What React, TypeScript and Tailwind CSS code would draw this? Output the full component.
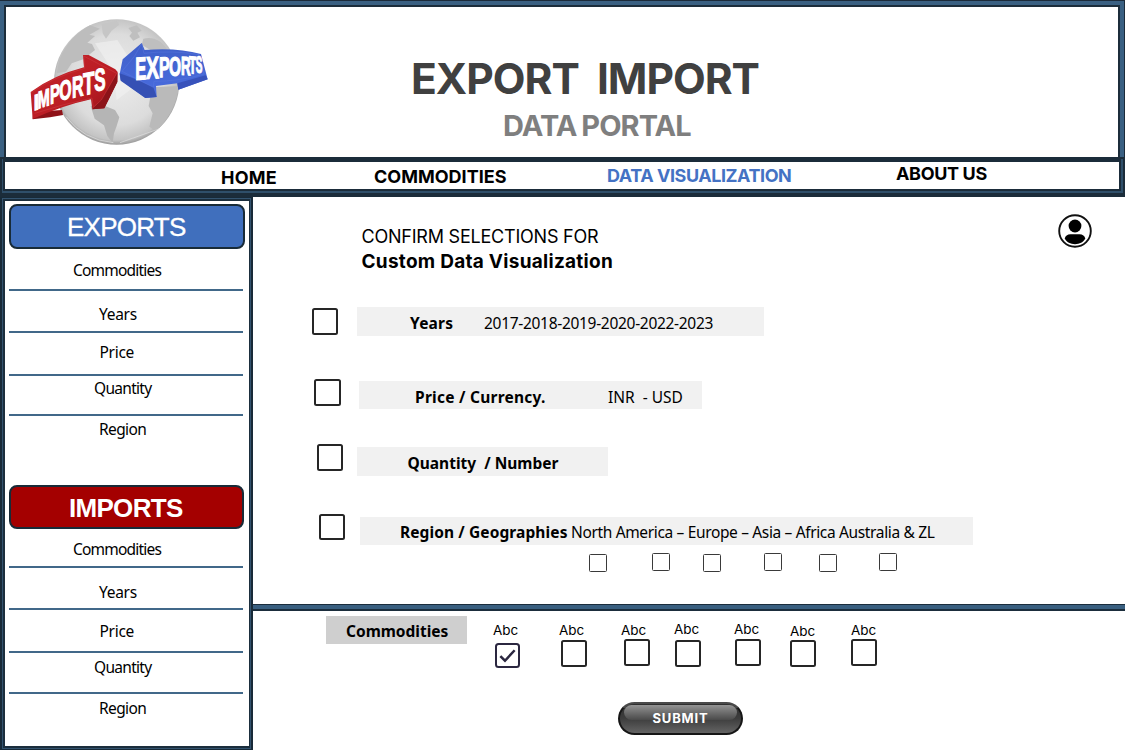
import type { ReactNode } from "react";

type Glyph = { ch: string; x: number; y: number; size: number; w: number; skew: number };

const importGlyphs: Glyph[] = [
  { ch: "I", x: 101, y: 332, size: 66, w: 16, skew: -18 },
  { ch: "M", x: 113, y: 326, size: 72, w: 36, skew: -18 },
  { ch: "P", x: 150, y: 313, size: 78, w: 30, skew: -16 },
  { ch: "O", x: 178, y: 303, size: 82, w: 37, skew: -15 },
  { ch: "R", x: 216, y: 294, size: 88, w: 35, skew: -13 },
  { ch: "T", x: 249, y: 286, size: 94, w: 34, skew: -10 },
  { ch: "S", x: 283, y: 274, size: 94, w: 34, skew: -8 },
];

const exportGlyphs: Glyph[] = [
  { ch: "E", x: 406, y: 240, size: 96, w: 33, skew: -4 },
  { ch: "X", x: 438, y: 237, size: 94, w: 39, skew: -4 },
  { ch: "P", x: 477, y: 232, size: 86, w: 32, skew: -3 },
  { ch: "O", x: 507, y: 228, size: 82, w: 36, skew: 0 },
  { ch: "R", x: 543, y: 224, size: 78, w: 29, skew: 3 },
  { ch: "T", x: 567, y: 220, size: 74, w: 22, skew: 6 },
  { ch: "S", x: 587, y: 217, size: 70, w: 20, skew: 8 },
];

function Letters({ glyphs, color }: { glyphs: Glyph[]; color: string }) {
  return (
    <>
      {glyphs.map((g) => (
        <text
          key={g.ch}
          transform={`translate(${g.x} ${g.y}) skewY(${g.skew})`}
          fontSize={g.size}
          textLength={g.w}
          lengthAdjust="spacingAndGlyphs"
          fill={color}
          stroke={color}
          strokeWidth="3.5"
          className="font-['Liberation_Sans',sans-serif] font-bold"
        >
          {g.ch}
        </text>
      ))}
    </>
  );
}

function Logo() {
  return (
    <svg viewBox="18 21 702 450" className="h-[150px] w-[234px] shrink-0">
      <defs>
        <radialGradient id="globe" cx="0.5" cy="0.48" r="0.52">
          <stop offset="0" stopColor="#ececec" />
          <stop offset="0.7" stopColor="#dcdcdc" />
          <stop offset="0.93" stopColor="#c4c4c4" />
          <stop offset="1" stopColor="#9c9c9c" />
        </radialGradient>
        <linearGradient id="red" x1="0" y1="0" x2="1" y2="1">
          <stop offset="0" stopColor="#c3242b" />
          <stop offset="0.6" stopColor="#bb1d24" />
          <stop offset="1" stopColor="#8f1016" />
        </linearGradient>
        <linearGradient id="blue" x1="0" y1="0" x2="0" y2="1">
          <stop offset="0" stopColor="#3f5fc8" />
          <stop offset="1" stopColor="#4a6de0" />
        </linearGradient>
      </defs>
      <circle cx="350" cy="246" r="188" fill="url(#globe)" />
      <path d="M270 76 Q205 112 178 180 L170 220 L198 215 L215 190 L250 178 L285 150 L276 132 L262 128 L285 108 L268 104 L300 86 Z" fill="#bdbdbd" />
      <path d="M305 72 L350 62 L358 74 L335 92 L318 116 L308 100 Z" fill="#c6c6c6" />
      <path d="M385 84 L410 76 L425 92 L412 98 L420 112 L400 122 L388 108 L396 98 Z M430 116 Q480 105 508 160 L455 152 L425 134 Z" fill="#bfbfbf" />
      <path d="M272 318 L300 312 L345 330 L358 352 L350 378 L342 400 L338 428 L322 408 L312 376 L284 356 Z" fill="#b5b5b5" />
      <path d="M456 262 L535 258 Q528 330 478 384 L462 390 L448 380 L458 340 L446 318 Z" fill="#bababa" />
      <path d="M285 130 L352 120 L430 240 L350 300 L340 215 Z" fill="#f2f2f2" opacity="0.6" />
      <path d="M198 350 Q250 420 340 428 M360 428 Q440 400 478 386" fill="none" stroke="#e2e2e2" strokeWidth="2" />

      <path d="M99 336 L186 330 L189 345 L150 352 L98 358 Z" fill="#8f1218" />
      <path d="M92 276 Q160 226 252 202 L249 165 L266 165 L346 208 L353 216 L352 246 L313 325 L277 328 L273 298 Q190 316 98 357 Z" fill="url(#red)" />
      <path d="M352 218 L352 246 L313 325 L277 328 L305 298 Z" fill="#8c1319" />
      <path d="M94 278 Q160 230 254 205 L251 168 L350 220 L304 300 L280 322 L276 294 Q190 312 104 340" fill="none" stroke="#cf3d42" strokeWidth="1.5" />

      <path d="M425 129 L434 150 Q530 142 603 162 L623 238 L535 269 L532 250 L468 258 L470 291 L436 294 L362 240 L359 222 L368 178 Z" fill="url(#blue)" />
      <path d="M359 220 L408 238 L460 262 L470 291 L436 294 L362 242 Z" fill="#3550b4" />
      <path d="M532 250 L617 226 L623 238 L535 269 Z" fill="#3852bb" />
      <path d="M425 131 L404 168 L366 214 L460 262 L462 244 Q540 244 612 222 L597 164 Q520 150 432 160 Z" fill="none" stroke="#5876dd" strokeWidth="1.5" />

      <Letters glyphs={importGlyphs} color="#fff" />
      <Letters glyphs={exportGlyphs} color="#fff" />
    </svg>
  );
}

function UserIcon({ className }: { className: string }) {
  return (
    <svg viewBox="0 0 34 34" className={`h-[34px] w-[34px] ${className}`}>
      <circle cx="17" cy="17" r="15.8" fill="none" stroke="#111" strokeWidth="1.9" />
      <circle cx="17" cy="12" r="6.4" fill="#000" />
      <path d="M12.5 20.3 H21.5 C24.6 20.3 26.8 22 27.3 24.6 C25.4 28.2 21.5 30.3 17 30.3 C12.5 30.3 8.6 28.2 6.7 24.6 C7.2 22 9.4 20.3 12.5 20.3 Z" fill="#000" />
    </svg>
  );
}

function Box({ className }: { className: string }) {
  return <div className={`shrink-0 rounded-[2.5px] border-2 border-[#262626] bg-white ${className}`} />;
}

function SideRow({ label, className }: { label: string; className: string }) {
  return (
    <div className={`whitespace-nowrap border-[#416889] font-['Noto_Sans',sans-serif] text-[15.5px] leading-5 text-black ${className}`}>
      {label}
    </div>
  );
}

function Sidebar() {
  return (
    <aside className="flex w-[253px] shrink-0 border-x-2 border-y border-[#182a38] bg-[#33536f]">
      <div className="my-px mr-px ml-px flex grow border-2 border-r-[1px] border-[#1b2e3d] bg-white pt-[3px] pl-[4px]">
        <div className="flex w-[236px] flex-col">
          <div className="flex h-[45px] items-center rounded-lg border-2 border-[#182b38] bg-[#406fbd] pl-[56px]">
            <span className="font-['Liberation_Sans',sans-serif] text-[26px] leading-none tracking-[-0.75px] text-white [-webkit-text-stroke:0.3px_white]">EXPORTS</span>
          </div>
          <div className="flex w-[234px] flex-col">
            <SideRow label="Commodities" className="h-[42px] border-b-2 pt-[11px] pl-[64px] tracking-[-0.8px]" />
            <SideRow label="Years" className="h-[42px] border-b-2 pt-[13px] pl-[90px] tracking-[-0.3px]" />
            <SideRow label="Price" className="h-[43px] border-b-2 pt-[9px] pl-[90.5px] tracking-[-0.3px]" />
            <SideRow label="Quantity" className="h-[40px] border-b-2 pt-[2px] pl-[85px] tracking-[-0.7px]" />
            <SideRow label="Region" className="h-[69px] pt-[3px] pl-[90px] tracking-[-0.6px]" />
          </div>
          <div className="flex h-[44px] w-[235px] items-center rounded-lg border-2 border-[#182b38] bg-[#a40000] pt-px pl-[58px]">
            <span className="font-['Liberation_Sans',sans-serif] text-[26px] leading-none font-bold tracking-[-0.7px] text-white">IMPORTS</span>
          </div>
          <div className="flex w-[234px] flex-col">
            <SideRow label="Commodities" className="h-[39px] border-b-2 pt-[10px] pl-[64px] tracking-[-0.8px]" />
            <SideRow label="Years" className="h-[42px] border-b-2 pt-[14px] pl-[90px] tracking-[-0.3px]" />
            <SideRow label="Price" className="h-[43px] border-b-2 pt-[11px] pl-[90.5px] tracking-[-0.3px]" />
            <SideRow label="Quantity" className="h-[41px] border-b-2 pt-[4px] pl-[85px] tracking-[-0.7px]" />
            <SideRow label="Region" className="pt-[4px] pl-[90px] tracking-[-0.6px]" />
          </div>
        </div>
      </div>
    </aside>
  );
}

const regionBoxes = ["ml-[336px] mt-[2px]", "ml-[45px] mt-px", "ml-[33px] mt-[2px]", "ml-[43px] mt-px", "ml-[37px] mt-[2px]", "ml-[42px] mt-px"];

const commodityItems = [
  { text: "mt-[10px]", cell: "ml-[26px]", box: "" },
  { text: "mt-[10px]", cell: "ml-[39px]", box: "ml-[2px] mt-px" },
  { text: "mt-[10px]", cell: "ml-[35px]", box: "ml-[3px]" },
  { text: "mt-[9px]", cell: "ml-[26px]", box: "ml-px mt-[2px]" },
  { text: "mt-[9px]", cell: "ml-[33px]", box: "ml-px mt-px" },
  { text: "mt-[11px]", cell: "ml-[29px]", box: "" },
  { text: "mt-[10px]", cell: "ml-[34px]", box: "" },
];

function Bar({ className, children }: { className: string; children: ReactNode }) {
  return (
    <div className={`flex items-start bg-[#f1f1f1] font-['Noto_Sans',sans-serif] leading-5 whitespace-pre text-black ${className}`}>
      {children}
    </div>
  );
}

export default function App() {
  return (
    <div className="flex h-[750px] w-[1125px] flex-col overflow-hidden bg-white">
      <header className="flex h-[157px] shrink-0 border-t border-r border-[#1c2b3a] bg-[#3a6082] pt-[4px] pr-[4px] pl-[4px]">
        <div className="flex grow border-2 border-b-0 border-[#1c2d3b] bg-white">
          <Logo />
          <div className="flex flex-col pt-[51px] font-['Inter',sans-serif] font-bold whitespace-pre">
            <h1 className="pl-[171px] text-[42.5px] leading-[42px] tracking-[-1px] text-[#404040]">{"EXPORT  IMPORT"}</h1>
            <h2 className="mt-[12px] pl-[263px] text-[29px] leading-[28px] tracking-[-0.95px] text-[#7f7f7f] [word-spacing:-1px]">DATA PORTAL</h2>
          </div>
        </div>
      </header>

      <nav className="flex h-[40px] shrink-0 border-x-2 border-t-2 border-b-4 border-[#1b2c3a] bg-[#2f4f6a] pr-[2px] pb-[2px] pl-px">
        <div className="flex grow items-start border-2 border-t-[3px] border-[#1b2c3a] bg-white font-['Inter',sans-serif] text-[18px] leading-[18px] font-bold whitespace-nowrap text-black">
          <a className="mt-[7px] ml-[216px] w-[153px] tracking-[0.2px]">HOME</a>
          <a className="mt-[6px] w-[233px]">COMMODITIES</a>
          <a className="mt-[5px] w-[289px] tracking-[-0.45px] text-[#4472c4]">DATA VISUALIZATION</a>
          <a className="mt-[3px] tracking-[-0.35px]">ABOUT US</a>
        </div>
      </nav>

      <div className="flex grow">
        <Sidebar />
        <main className="flex grow flex-col">
          <div className="flex h-[110px] shrink-0 justify-between pr-[33px] pl-[108px]">
            <div className="pt-[27px] font-['Inter',sans-serif] leading-[25px] text-black">
              <p className="pl-[0.5px] text-[18px] tracking-[-0.22px]">CONFIRM SELECTIONS FOR</p>
              <p className="pl-[0.5px] text-[19px] font-bold tracking-[0.27px]">Custom Data Visualization</p>
            </div>
            <UserIcon className="mt-[17px]" />
          </div>

          <div className="flex h-[72px] shrink-0 items-start pl-[59px]">
            <Box className="mt-px h-[27px] w-[26px]" />
            <Bar className="ml-[19px] h-[29px] w-[407px] pt-[6px] pl-[53px]">
              <b className="w-[74px] text-[15.5px] tracking-[0.2px]">Years</b>
              <span className="text-[15.5px] tracking-[-0.3px]">2017-2018-2019-2020-2022-2023</span>
            </Bar>
          </div>
          <div className="flex h-[65px] shrink-0 items-start pl-[61px]">
            <Box className="h-[27px] w-[27px]" />
            <Bar className="mt-[2px] ml-[18px] h-[28px] w-[343px] pt-[6px] pl-[56px]">
              <b className="w-[193px] text-[15.5px] tracking-[0.25px]">Price / Currency.</b>
              <span className="text-[15.5px]">{"INR  - USD"}</span>
            </Bar>
          </div>
          <div className="flex h-[70px] shrink-0 items-start pl-[64px]">
            <Box className="h-[27px] w-[26px]" />
            <Bar className="mt-[3px] ml-[14px] h-[29px] w-[251px] pt-[6px] pl-[50.5px]">
              <b className="text-[15.5px]">{"Quantity  / Number"}</b>
            </Bar>
          </div>
          <div className="flex h-[38px] shrink-0 items-start pl-[66px]">
            <Box className="h-[26px] w-[26px]" />
            <Bar className="mt-[3px] ml-[15px] h-[28px] w-[613px] pt-[5px] pl-[40px]">
              <b className="w-[171px] text-[15.5px] tracking-[0.1px]">Region / Geographies</b>
              <span className="text-[15.5px] tracking-[-0.35px]">North America – Europe – Asia – Africa Australia &amp; ZL</span>
            </Bar>
          </div>
          <div className="flex h-[52px] shrink-0 items-start">
            {regionBoxes.map((m) => (
              <div key={m} className={`h-[18px] w-[18px] rounded-[1.5px] border-[1.5px] border-[#3a3a3a] ${m}`} />
            ))}
          </div>

          <div className="h-[7px] shrink-0 border-t border-b-2 border-[#1b2d3c] bg-[#395f80]" />

          <div className="flex h-[91px] shrink-0 items-start font-['Inter',sans-serif] text-black">
            <div className="mt-[5px] h-[28px] w-[141px] ml-[73px] bg-[#cfcfcf] pt-[5px] pl-[20px] font-['Noto_Sans',sans-serif] text-[15.5px] leading-5 font-bold">Commodities</div>
            {commodityItems.map((c, i) => (
              <div key={i} className={`flex w-[27px] shrink-0 flex-col items-start ${c.cell}`}>
                <span className={`text-[13.5px] leading-[18px] ${c.text}`}>Abc</span>
                {i === 0 ? (
                  <div className="mt-[4px] ml-[2px] h-[25px] w-[25px] rounded-[3.5px] border-[2.5px] border-[#2b2740]">
                    <svg viewBox="0 0 20 20" className="h-full w-full" fill="none" stroke="#2b2740" strokeWidth="2.4">
                      <path d="M3.2 10.5 L7.6 15 L16.8 5" />
                    </svg>
                  </div>
                ) : (
                  <Box className={`h-[27px] w-[26px] ${c.box}`} />
                )}
              </div>
            ))}
          </div>

          <div className="flex pl-[365px]">
            <button className="relative flex h-[33px] w-[125px] items-center justify-center rounded-full border-2 border-[#161616] border-t-[#4a4a4a] bg-linear-to-b from-[#2e2e2e] via-[#3d3d3d] to-[#646464]">
              <span className="absolute top-[1px] left-[4px] h-[15px] w-[113px] rounded-[9px] bg-linear-to-b from-[#949494] to-[#4a4a4a]" />
              <span className="relative font-['Inter',sans-serif] text-[13px] leading-none font-bold tracking-[0.8px] text-white">SUBMIT</span>
            </button>
          </div>
        </main>
      </div>
    </div>
  );
}
